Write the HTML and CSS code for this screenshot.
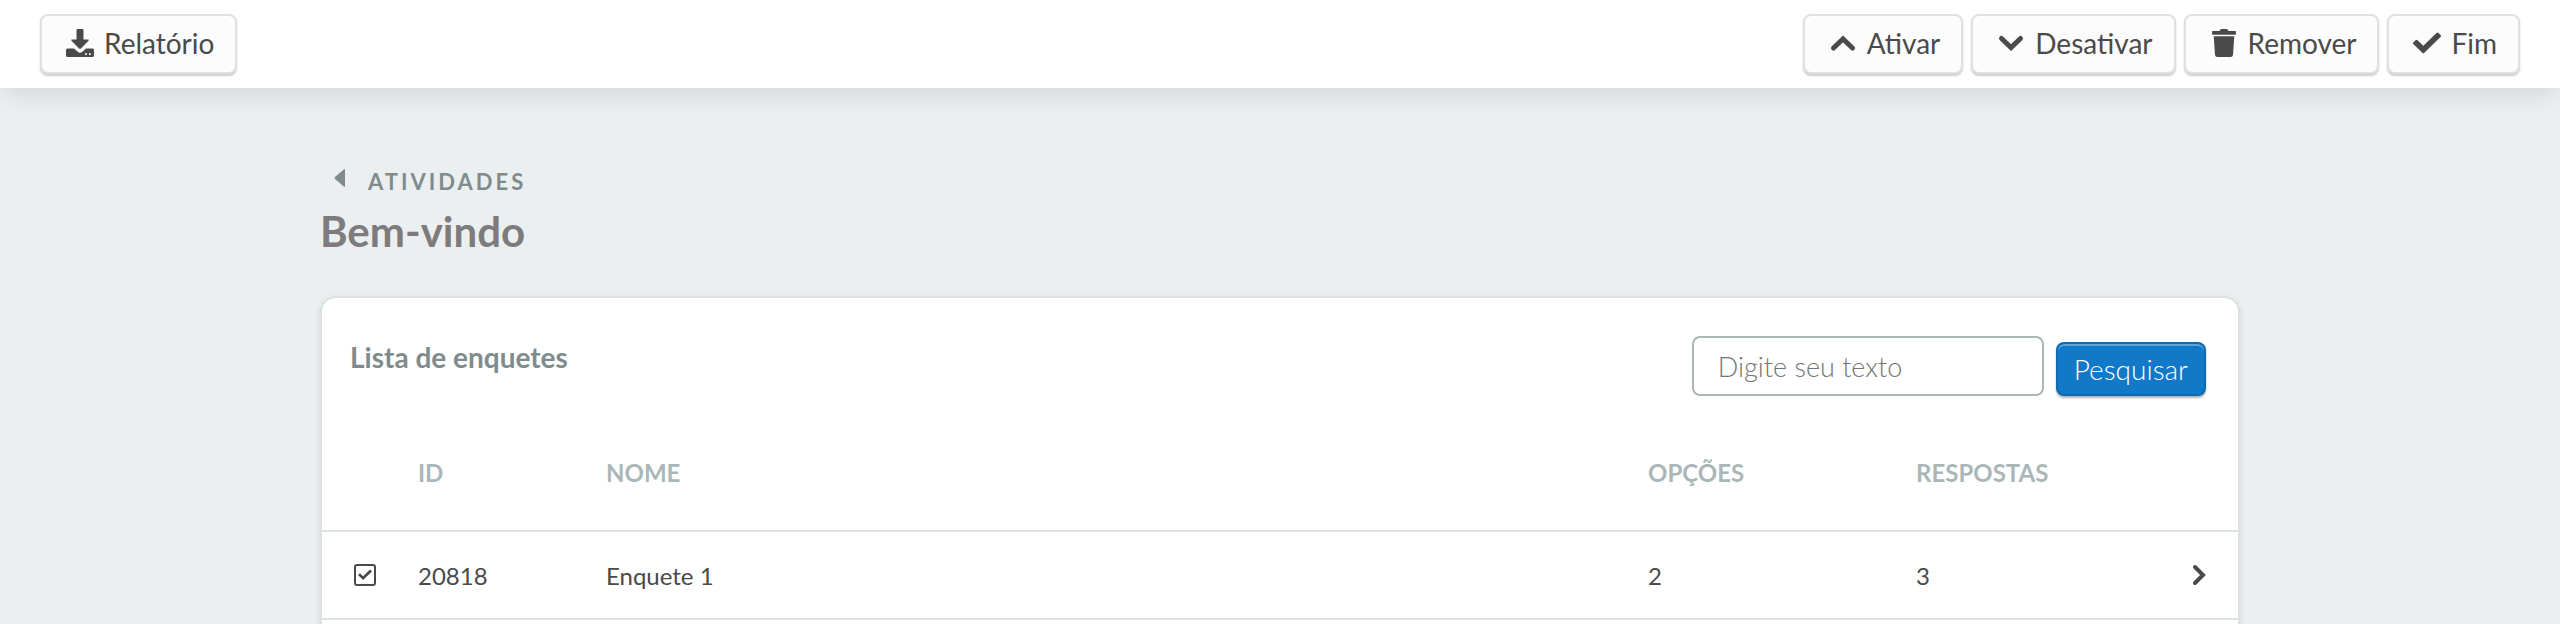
FILE: index.html
```html
<!DOCTYPE html>
<html lang="pt-BR">
<head>
  <meta charset="UTF-8">
  <meta name="viewport" content="width=device-width, initial-scale=1.0">
  <title>Lista de enquetes</title>
  <link rel="stylesheet" href="styles.css">
</head>
<body>
  <header class="toolbar">
    <button type="button" class="btn">
      <svg class="icon" viewBox="0 0 28 28" aria-hidden="true"><path d="M11.5 0h5q1 0 1 1v9.500h4.500q1.500 0 .500 1.200l-7.500 7.800q-1 .900-2 0l-7.500-7.800q-1-1.200.500-1.200h4.500V1q0-1 1-1z"/><path fill-rule="evenodd" d="M1.500 19.500h6.500l4 3.500q2 1.500 4 0l4-3.500h6.500q1.500 0 1.500 1.500v5.500q0 1.500-1.500 1.500h-25Q0 28 0 26.500V21q0-1.500 1.500-1.500zM19 24.300v1.800h1.800v-1.800zM23 24.300v1.800h1.800v-1.800z"/></svg>
      Relatório
    </button>
    <div class="toolbar-actions">
      <button type="button" class="btn">
        <svg class="icon" viewBox="0 0 28 28" aria-hidden="true"><path class="line" d="M4.500 19L14 10l9.500 9"/></svg>
        Ativar
      </button>
      <button type="button" class="btn">
        <svg class="icon" viewBox="0 0 28 28" aria-hidden="true"><path class="line" d="M4.500 9.500L14 18.500l9.500-9"/></svg>
        Desativar
      </button>
      <button type="button" class="btn">
        <svg class="icon" viewBox="0 0 28 28" aria-hidden="true"><path d="M2.800 2h6.700l.800-1.300Q10.700 0 11.500 0h5q.800 0 1.200.700L18.500 2h6.700q.800 0 .800.800v2.100q0 .800-.800.800H2.800Q2 5.700 2 4.900V2.800Q2 2 2.800 2zM3.700 7.300h20.600L23 25.700q-.200 2.300-2.500 2.300h-13Q5.200 28 5 25.700z"/></svg>
        Remover
      </button>
      <button type="button" class="btn">
        <svg class="icon" viewBox="0 0 28 28" aria-hidden="true"><path d="M.500 13.200l2-2q1-1 2 0l5.800 5.600L23.500 4q1-1 2 0l2 2q1 1 0 2L11.300 23.800q-1 1-2 0L.500 15.200q-1-1 0-2z"/></svg>
        Fim
      </button>
    </div>
  </header>

  <main class="page">
    <a class="breadcrumb" href="#">
      <svg class="caret" viewBox="0 0 12 20" aria-hidden="true"><path d="M11 2v16q0 1.500-1.200.500L1 11q-1-1 0-2l8.800-7.500Q11 .500 11 2z"/></svg>
      Atividades
    </a>
    <h1>Bem-vindo</h1>

    <section class="card">
      <div class="card-header">
        <h2>Lista de enquetes</h2>
        <form class="search">
          <input type="text" class="search-input" aria-label="Digite seu texto" placeholder="Digite seu texto">
          <button type="submit" class="search-btn">Pesquisar</button>
        </form>
      </div>

      <table class="polls">
        <thead>
          <tr>
            <th class="col-check"></th>
            <th class="col-id">ID</th>
            <th>Nome</th>
            <th class="col-options">Opções</th>
            <th class="col-answers">Respostas</th>
          </tr>
        </thead>
        <tbody>
          <tr>
            <td class="col-check"><input type="checkbox" class="check" aria-label="Selecionar Enquete 1" checked></td>
            <td>20818</td>
            <td>Enquete 1</td>
            <td>2</td>
            <td>
              <div class="last">
                3
                <a class="open" href="#" aria-label="Abrir Enquete 1">
                  <svg class="chevron" viewBox="0 0 14 24" aria-hidden="true"><path class="line" d="M3 4l8 8-8 8"/></svg>
                </a>
              </div>
            </td>
          </tr>
        </tbody>
      </table>
    </section>
  </main>
</body>
</html>
```

FILE: styles.css
```css
* {
  box-sizing: border-box;
}
body {
  display: flex;
  flex-direction: column;
  min-height: 100vh;
  margin: 0;
  background: #ebeff0;
  color: #4a4a4a;
  font-family: Lato, "Open Sans", sans-serif;
  font-size: 24px;
}
svg {
  fill: currentColor;
}
.line {
  fill: none;
  stroke: currentColor;
  stroke-width: 5;
  stroke-linecap: round;
}

/* top bar */
.toolbar {
  display: flex;
  justify-content: space-between;
  padding: 14px 40px;
  background: #fff;
  box-shadow: 0 8px 28px -4px rgba(0, 0, 0, 0.12);
}
.toolbar-actions {
  display: flex;
  gap: 8px;
}
.btn {
  display: flex;
  align-items: center;
  gap: 10px;
  height: 60px;
  padding: 0 21px 2px 24px;
  border: 2px solid #e0e0e0;
  border-radius: 8px;
  background: #fcfcfc;
  box-shadow: 0 2px 2px rgba(0, 0, 0, 0.2);
  color: #4a4a4a;
  font-family: inherit;
  font-size: 28px;
  cursor: pointer;
}
.icon {
  width: 28px;
  height: 28px;
}

/* content */
.page {
  display: flex;
  flex: 1;
  flex-direction: column;
  width: 75%;
  margin: 0 auto;
  padding-top: 78px;
}
.breadcrumb {
  display: flex;
  align-items: center;
  gap: 22px;
  padding-left: 14px;
  color: #7f8c8d;
  font-size: 22px;
  font-weight: bold;
  line-height: 32px;
  letter-spacing: 3px;
  text-transform: uppercase;
  text-decoration: none;
}
.caret {
  width: 12px;
  height: 20px;
  margin-bottom: 8px;
}
h1 {
  margin: 2px 0 34px;
  color: #7d7b7d;
  font-size: 42px;
  line-height: 62px;
}
.card {
  flex: 1;
  border: 2px solid #dce1e1;
  border-bottom: none;
  border-radius: 16px 16px 0 0;
  background: #fff;
  box-shadow: 0 2px 6px rgba(0, 0, 0, 0.1);
}
.card-header {
  display: flex;
  justify-content: space-between;
  align-items: flex-start;
  padding: 38px 32px 38px 28px;
}
h2 {
  margin: 0;
  color: #7f8c8d;
  font-size: 28px;
  line-height: 42px;
}
.search {
  display: flex;
  align-items: flex-end;
  gap: 12px;
}
.search-input {
  width: 352px;
  height: 60px;
  padding: 0 24px;
  border: 2px solid #aab7b8;
  border-radius: 8px;
  background: #fff;
  font-family: inherit;
  font-size: 27px;
  font-weight: 300;
}
.search-input::placeholder {
  color: #757575;
}
.search-btn {
  height: 54px;
  padding: 0 16px;
  border: 2px solid #0e6ab3;
  border-radius: 8px;
  background: #1278c8;
  box-shadow: inset 0 2px 0 #5ea5dc, 0 2px 2px rgba(0, 0, 0, 0.3);
  color: #fff;
  font-family: inherit;
  font-size: 28px;
  font-weight: 300;
  cursor: pointer;
}

/* table */
.polls {
  width: 100%;
  border-collapse: separate;
  border-spacing: 0;
  table-layout: fixed;
}
.polls th,
.polls td {
  padding: 0;
  border-bottom: 2px solid #dce1e1;
  text-align: left;
}
.polls th {
  height: 98px;
  padding-bottom: 20px;
  color: #aab7b8;
  text-transform: uppercase;
}
.polls td {
  height: 88px;
}
.polls .col-check {
  width: 96px;
  padding-left: 32px;
}
.col-id {
  width: 188px;
}
.col-options {
  width: 268px;
}
.col-answers {
  width: 322px;
}
.check {
  display: grid;
  place-items: center;
  appearance: none;
  width: 22px;
  height: 22px;
  margin: 0;
  border: 2px solid #4a4a4a;
  border-radius: 3px;
}
.check:checked::before {
  content: "";
  width: 14px;
  height: 12px;
  background: #4a4a4a;
  clip-path: polygon(0 50%, 14% 35%, 36% 60%, 86% 5%, 100% 20%, 36% 92%);
}
.last {
  display: flex;
  align-items: center;
  justify-content: space-between;
  padding-right: 32px;
}
.open {
  display: flex;
  color: #4a4a4a;
}
.chevron {
  width: 14px;
  height: 24px;
}
.chevron .line {
  stroke-width: 4;
}
```
